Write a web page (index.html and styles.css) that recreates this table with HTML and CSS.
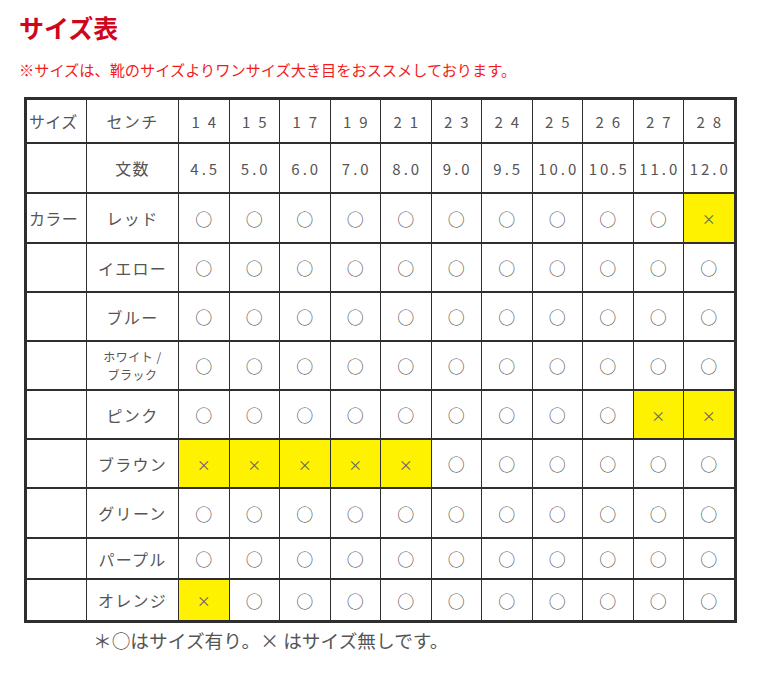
FILE: index.html
```html
<!DOCTYPE html>
<html lang="ja">
<head>
<meta charset="utf-8">
<link rel="stylesheet" href="styles.css">
</head>
<body>
<main class="page">
  <h1 class="title">サイズ表</h1>
  <p class="lead">※サイズは、靴のサイズよりワンサイズ大き目をおススメしております。</p>
  <div class="chart">
    <div class="c lbl">サイズ</div><div class="c name">センチ</div>
    <div class="c hnum">14</div><div class="c hnum">15</div><div class="c hnum">17</div><div class="c hnum">19</div><div class="c hnum">21</div><div class="c hnum">23</div><div class="c hnum">24</div><div class="c hnum">25</div><div class="c hnum">26</div><div class="c hnum">27</div><div class="c hnum">28</div>

    <div class="c lbl"></div><div class="c name">文数</div>
    <div class="c num">4.5</div><div class="c num">5.0</div><div class="c num">6.0</div><div class="c num">7.0</div><div class="c num">8.0</div><div class="c num">9.0</div><div class="c num">9.5</div><div class="c num">10.0</div><div class="c num">10.5</div><div class="c num">11.0</div><div class="c num">12.0</div>

    <div class="c lbl">カラー</div><div class="c name">レッド</div>
    <div class="c o">○</div><div class="c o">○</div><div class="c o">○</div><div class="c o">○</div><div class="c o">○</div><div class="c o">○</div><div class="c o">○</div><div class="c o">○</div><div class="c o">○</div><div class="c o">○</div><div class="c x">×</div>

    <div class="c lbl"></div><div class="c name">イエロー</div>
    <div class="c o">○</div><div class="c o">○</div><div class="c o">○</div><div class="c o">○</div><div class="c o">○</div><div class="c o">○</div><div class="c o">○</div><div class="c o">○</div><div class="c o">○</div><div class="c o">○</div><div class="c o">○</div>

    <div class="c lbl"></div><div class="c name">ブルー</div>
    <div class="c o">○</div><div class="c o">○</div><div class="c o">○</div><div class="c o">○</div><div class="c o">○</div><div class="c o">○</div><div class="c o">○</div><div class="c o">○</div><div class="c o">○</div><div class="c o">○</div><div class="c o">○</div>

    <div class="c lbl"></div><div class="c name small">ホワイト /<br>ブラック</div>
    <div class="c o">○</div><div class="c o">○</div><div class="c o">○</div><div class="c o">○</div><div class="c o">○</div><div class="c o">○</div><div class="c o">○</div><div class="c o">○</div><div class="c o">○</div><div class="c o">○</div><div class="c o">○</div>

    <div class="c lbl"></div><div class="c name">ピンク</div>
    <div class="c o">○</div><div class="c o">○</div><div class="c o">○</div><div class="c o">○</div><div class="c o">○</div><div class="c o">○</div><div class="c o">○</div><div class="c o">○</div><div class="c o">○</div><div class="c x">×</div><div class="c x">×</div>

    <div class="c lbl"></div><div class="c name">ブラウン</div>
    <div class="c x">×</div><div class="c x">×</div><div class="c x">×</div><div class="c x">×</div><div class="c x">×</div><div class="c o">○</div><div class="c o">○</div><div class="c o">○</div><div class="c o">○</div><div class="c o">○</div><div class="c o">○</div>

    <div class="c lbl"></div><div class="c name">グリーン</div>
    <div class="c o">○</div><div class="c o">○</div><div class="c o">○</div><div class="c o">○</div><div class="c o">○</div><div class="c o">○</div><div class="c o">○</div><div class="c o">○</div><div class="c o">○</div><div class="c o">○</div><div class="c o">○</div>

    <div class="c lbl"></div><div class="c name">パープル</div>
    <div class="c o">○</div><div class="c o">○</div><div class="c o">○</div><div class="c o">○</div><div class="c o">○</div><div class="c o">○</div><div class="c o">○</div><div class="c o">○</div><div class="c o">○</div><div class="c o">○</div><div class="c o">○</div>

    <div class="c lbl"></div><div class="c name">オレンジ</div>
    <div class="c x">×</div><div class="c o">○</div><div class="c o">○</div><div class="c o">○</div><div class="c o">○</div><div class="c o">○</div><div class="c o">○</div><div class="c o">○</div><div class="c o">○</div><div class="c o">○</div><div class="c o">○</div>
  </div>
  <p class="note">＊○はサイズ有り。× はサイズ無しです。</p>
</main>
</body>
</html>
```

FILE: styles.css
```css
html, body {
  margin: 0;
  padding: 0;
  background: #ffffff;
}

.page {
  display: flex;
  flex-direction: column;
  align-items: flex-start;
  padding: 11px 0 0 19px;
  font-family: "Noto Sans CJK JP", "Noto Sans", sans-serif;
}

.title {
  margin: 0;
  font-size: 25px;
  line-height: 32px;
  font-weight: 700;
  color: #d0061c;
}

.lead {
  margin: 16px 0 0;
  font-size: 15.2px;
  line-height: 20px;
  color: #f21c1c;
}

.chart {
  margin: 18px 0 0 5px;
  display: grid;
  grid-template-columns: 59px 91px repeat(11, 49.5px);
  grid-template-rows: 42px 48px 48px 47px 47px 47px 47px 47px 48px 39px 40px;
  column-gap: 1px;
  row-gap: 2px;
  padding: 3px;
  background: #2e2e2e;
}

.c {
  background: #ffffff;
  color: #555555;
  display: flex;
  align-items: center;
  justify-content: center;
  font-size: 16px;
  line-height: 1;
}

.lbl {
  justify-content: flex-start;
  padding-left: 2px;
  font-size: 16px;
  letter-spacing: 0.02em;
}

.name {
  font-size: 16px;
  letter-spacing: 0.08em;
}

.name.small {
  text-align: center;
  font-size: 12px;
  line-height: 18px;
  letter-spacing: 0.04em;
}

.hnum {
  font-size: 15px;
  letter-spacing: 8px;
  padding-left: 8px;
}

.num {
  font-size: 15px;
  letter-spacing: 3px;
  padding-left: 3px;
}

.o {
  font-size: 17px;
  color: #5a5a5a;
}

.x {
  background: #fff200;
  font-size: 14px;
  color: #666666;
}

.note {
  margin: 5px 0 0 74px;
  font-size: 18.7px;
  line-height: 24px;
  color: #555555;
}
```
